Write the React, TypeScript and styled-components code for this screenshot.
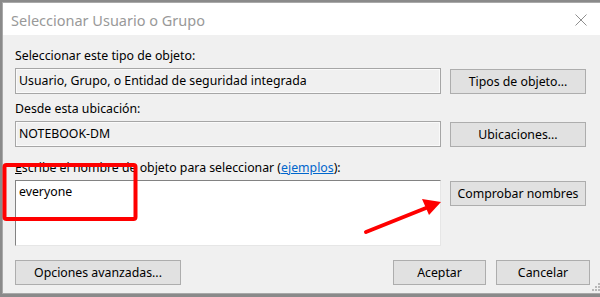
import React from 'react'
import styled, { createGlobalStyle } from 'styled-components'

const GlobalStyle = createGlobalStyle`
  html, body {
    margin: 0;
    padding: 0;
    width: 600px;
    height: 297px;
    overflow: hidden;
    background: #8a8a8a;
  }
`

const Desktop = styled.div`
  width: 600px;
  height: 297px;
  padding: 2px 0 0 2px;
  box-sizing: border-box;
  position: relative;
  font-family: 'Noto Sans', 'Liberation Sans', sans-serif;
  font-size: 12.3px;
  color: #000;
`

const Window = styled.div`
  width: 600px;
  height: 292px;
  box-sizing: border-box;
  border: 1px solid #a9a9a9;
  border-right: none;
  background: #f0f0f0;
  display: flex;
  flex-direction: column;
  position: relative;
`

const TitleBar = styled.div`
  height: 32px;
  background: #fff;
  display: flex;
  align-items: center;
  justify-content: space-between;
  padding: 0 12px 0 8px;
`

const TitleText = styled.div`
  font-size: 14.5px;
  color: #999;
  padding-top: 2px;
`

const Close = styled.svg`
  width: 12px;
  height: 12px;
  margin-right: 3px;
  margin-top: 1px;
`

const Body = styled.div`
  flex: 1;
  padding: 13px 12px 0 12px;
  display: flex;
  flex-direction: column;
`

const Label = styled.div<{ $gap?: number }>`
  line-height: 16px;
  height: 16px;
  margin-top: ${p => p.$gap ?? 0}px;
  margin-bottom: 4px;
  white-space: nowrap;
`

const Row = styled.div`
  display: grid;
  grid-template-columns: 426px 136px;
  column-gap: 9px;
  align-items: start;
`

const Field = styled.div`
  height: 26px;
  box-sizing: border-box;
  border: 1px solid #a6a6a6;
  background: #f0f0f0;
  box-shadow: inset 0 0 0 1px #fafafa;
  padding: 0 3px;
  line-height: 24px;
  white-space: nowrap;
  overflow: hidden;
`

const Area = styled.div`
  height: 66px;
  box-sizing: border-box;
  border: 1px solid #e6e6e6;
  border-top-color: #828282;
  border-left-color: #828282;
  background: #fff;
  padding: 3px 3px;
  line-height: 16px;
`

const Button = styled.div<{ $w?: number }>`
  height: 25px;
  width: ${p => (p.$w ? `${p.$w}px` : 'auto')};
  box-sizing: border-box;
  border: 1px solid #adadad;
  background: #e1e1e1;
  display: flex;
  align-items: center;
  justify-content: center;
  margin-top: 1px;
  white-space: nowrap;
`

const Footer = styled.div`
  display: flex;
  align-items: center;
  margin-top: 13px;
  gap: 10px;

  & > :first-child {
    margin-right: auto;
  }
`

const Link = styled.span`
  color: #0066cc;
  text-decoration: underline;
`

const Accel = styled.span`
  text-decoration: underline;
`

const Grip = styled.svg`
  position: absolute;
  right: 1px;
  bottom: 1px;
  width: 10px;
  height: 10px;
`

const Overlay = styled.svg`
  position: absolute;
  left: 0;
  top: 0;
  width: 600px;
  height: 297px;
  pointer-events: none;
`

export default function App() {
  return (
    <>
      <GlobalStyle />
      <Desktop>
        <Window>
          <TitleBar>
            <TitleText>Seleccionar Usuario o Grupo</TitleText>
            <Close viewBox="0 0 12 12">
              <path d="M0.5 0.5 L11.5 11.5 M11.5 0.5 L0.5 11.5" stroke="#8f8f8f" strokeWidth="1" />
            </Close>
          </TitleBar>
          <Body>
            <Label>Seleccionar este tipo de objeto:</Label>
            <Row>
              <Field>Usuario, Grupo, o Entidad de seguridad integrada</Field>
              <Button>Tipos de objeto...</Button>
            </Row>
            <Label $gap={7}>Desde esta ubicación:</Label>
            <Row>
              <Field>NOTEBOOK-DM</Field>
              <Button>Ubicaciones...</Button>
            </Row>
            <Label $gap={13}>
              <Accel>E</Accel>scribe el nombre de objeto para seleccionar (<Link>ejemplos</Link>):
            </Label>
            <Row>
              <Area>everyone</Area>
              <Button>Comprobar nombres</Button>
            </Row>
            <Footer>
              <Button $w={166}>Opciones avanzadas...</Button>
              <Button $w={93}>Aceptar</Button>
              <Button $w={94}>Cancelar</Button>
            </Footer>
          </Body>
          <Grip viewBox="0 0 10 10">
            {[
              [8, 2],
              [5, 5],
              [8, 5],
              [2, 8],
              [5, 8],
              [8, 8],
            ].map(([x, y]) => (
              <rect key={`${x}-${y}`} x={x - 1} y={y - 1} width="2" height="2" fill="#b8b8b8" />
            ))}
          </Grip>
        </Window>
        <Overlay viewBox="0 0 600 297">
          <rect x="4.5" y="165" width="131" height="54" rx="2" fill="none" stroke="#ff0000" strokeWidth="4" />
          <line x1="366" y1="232" x2="426" y2="208" stroke="#ff0000" strokeWidth="4" strokeLinecap="round" />
          <polygon points="441,202 422,199 429,215" fill="#ff0000" />
        </Overlay>
      </Desktop>
    </>
  )
}
